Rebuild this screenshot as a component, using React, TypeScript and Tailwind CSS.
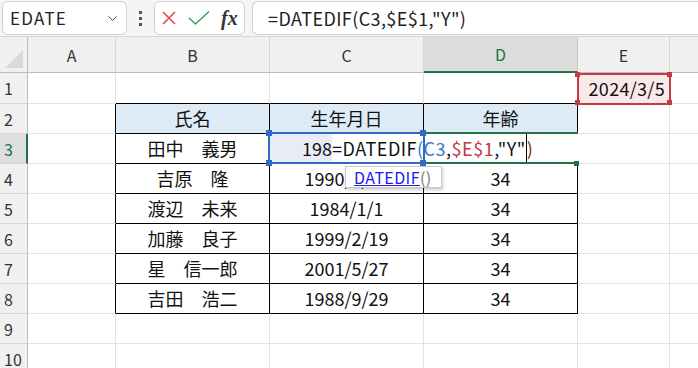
import { ChevronDown } from 'lucide-react'

const cellFont = "font-['Noto_Sans_CJK_JP','Noto_Sans',sans-serif]"

const people = [
  { name: '吉原　隆', born: '1990/1/23', age: '34' },
  { name: '渡辺　未来', born: '1984/1/1', age: '34' },
  { name: '加藤　良子', born: '1999/2/19', age: '34' },
  { name: '星　信一郎', born: '2001/5/27', age: '34' },
  { name: '吉田　浩二', born: '1988/9/29', age: '34' }
]

const grid = 'border-r border-b border-[#e1e1e1]'
const ruled = 'border-r border-b border-black'

function RowHead({ n, active = false }: { n: number; active?: boolean }) {
  return (
    <div
      className={
        active
          ? 'flex items-center pl-1 bg-[#dedede] border-r-2 border-r-[#217346] border-b border-b-[#d4d4d4] text-[#217346] text-[16px]'
          : 'flex items-center pl-1 bg-[#f0f0f0] border-r border-r-[#bdbdbd] border-b border-b-[#d8d8d8] text-[#333] text-[16px]'
      }
    >
      {n}
    </div>
  )
}

function FormulaBar() {
  return (
    <div className="h-[37px] flex items-center gap-0 bg-[#f5f5f5] border-b border-[#d6d6d6] pl-[2px]">
      <div className="w-[125px] h-[34px] flex items-center justify-between pl-[7px] pr-[6px] bg-white border border-[#d2d2d2] rounded-md text-[17px] tracking-[1.2px] text-[#222]">
        <span>EDATE</span>
        <ChevronDown size={15} strokeWidth={1.5} className="text-[#333]" />
      </div>
      <div className="w-[27px] flex flex-col items-center gap-[3px]">
        <span className="w-[3px] h-[3px] bg-[#555]" />
        <span className="w-[3px] h-[3px] bg-[#555]" />
        <span className="w-[3px] h-[3px] bg-[#555]" />
      </div>
      <div className="w-[91px] h-[34px] flex items-center gap-[11px] pl-[6px] bg-white border border-[#d2d2d2] rounded-md">
        <svg width="16" height="16" viewBox="0 0 16 16">
          <path d="M2 2 L14 14 M14 2 L2 14" stroke="#e5484d" strokeWidth="1.6" fill="none" />
        </svg>
        <svg width="22" height="16" viewBox="0 0 22 16">
          <path d="M1 8 L7.5 14 L21 1.5" stroke="#3aa35a" strokeWidth="1.6" fill="none" />
        </svg>
        <span className="font-['Liberation_Serif',serif] italic font-bold text-[20px] text-[#333] leading-none">
          fx
        </span>
      </div>
      <div className="flex-1 ml-[7px] h-[34px] flex items-center pl-[15px] bg-white border border-r-0 border-[#d2d2d2] rounded-l-md text-[18px] tracking-[0.4px] text-[#222]">
        =DATEDIF(C3,$E$1,"Y")
      </div>
    </div>
  )
}

function EditCell() {
  return (
    <div className="col-span-2 relative flex items-stretch border-b border-black bg-white tracking-[0.5px]">
      <div className="w-[62px] flex items-center justify-end bg-[#e8ecf6] tracking-normal">198</div>
      <span className="flex items-center whitespace-nowrap">
        =DATEDIF<span className="text-[#3a78cf]">(C3</span>,<span className="text-[#c0393f]">$E$1</span>,"Y"
      </span>
      <span className="w-px bg-black" />
      <span className="flex items-center text-[#5a3a1a]">)</span>
      <div className="absolute left-[-2px] top-[-2px] w-[157px] h-[32px] border-2 border-[#2f6bc4] pointer-events-none" />
      <div className="absolute left-[155px] top-[-2px] w-[153px] h-[2px] bg-[#217346]" />
      <div className="absolute left-[155px] top-[28px] w-[153px] h-[2px] bg-[#217346]" />
      <span className="absolute left-[-4px] top-[-4px] w-[6px] h-[6px] bg-[#2f6bc4]" />
      <span className="absolute left-[150px] top-[-4px] w-[6px] h-[6px] bg-[#2f6bc4]" />
      <span className="absolute left-[-4px] top-[26px] w-[6px] h-[6px] bg-[#2f6bc4]" />
      <span className="absolute left-[150px] top-[26px] w-[6px] h-[6px] bg-[#2f6bc4]" />
      <span className="absolute left-[304px] top-[27px] w-[5px] h-[5px] bg-[#217346]" />
      <div className="absolute left-[75px] top-[32px] w-[97px] h-[22px] z-10 flex items-center pl-[8px] bg-white border border-[#c8c8c8] shadow-[1px_2px_3px_rgba(0,0,0,0.2)] text-[16px] tracking-[0.4px] leading-none">
        <span className="text-[#1a1aee] underline">DATEDIF</span>
        <span className="text-[#777]">()</span>
      </div>
    </div>
  )
}

export default function App() {
  return (
    <div className={`w-[698px] h-[368px] overflow-hidden bg-white ${cellFont}`}>
      <FormulaBar />
      <div className="grid grid-cols-[28px_88px_154px_154px_154px_92px_1fr] grid-rows-[36px_31px_repeat(9,30px)] text-[18px] text-[#111]">
        {/* column headers */}
        <div className="relative bg-[#f0f0f0] border-r border-b border-[#bdbdbd]">
          <svg className="absolute right-[4px] bottom-[4px]" width="18" height="18" viewBox="0 0 18 18">
            <polygon points="18,0 18,18 0,18" fill="#d9d9d9" />
          </svg>
        </div>
        {['A', 'B', 'C'].map((c) => (
          <div key={c} className="flex items-center justify-center bg-[#f0f0f0] border-r border-r-[#d8d8d8] border-b border-b-[#bdbdbd] text-[16px] text-[#333]">
            {c}
          </div>
        ))}
        <div className="flex items-center justify-center bg-[#dcdcdc] border-r border-r-[#c8c8c8] border-b-2 border-b-[#217346] text-[16px] text-[#217346]">
          D
        </div>
        <div className="flex items-center justify-center bg-[#f0f0f0] border-r border-r-[#d8d8d8] border-b border-b-[#bdbdbd] text-[16px] text-[#333]">
          E
        </div>
        <div className="bg-[#f0f0f0] border-b border-b-[#bdbdbd]" />

        {/* row 1 */}
        <RowHead n={1} />
        <div className={grid} />
        <div className="border-r border-r-[#e1e1e1] border-b border-b-black" />
        <div className="border-r border-r-[#e1e1e1] border-b border-b-black" />
        <div className="border-r border-r-[#e1e1e1] border-b border-b-black" />
        <div className="relative flex items-center justify-end pr-[4px] bg-[#fbe9ea] border-r border-b border-[#e1e1e1] tracking-[0.3px]">
          2024/3/5
          <div className="absolute left-[-1px] top-0 w-[94px] h-[32px] border-2 border-[#c23a42]" />
          <span className="absolute left-[-3px] top-[-1px] w-[5px] h-[5px] bg-[#c23a42]" />
          <span className="absolute left-[89px] top-[-1px] w-[5px] h-[5px] bg-[#c23a42]" />
          <span className="absolute left-[-3px] top-[27px] w-[5px] h-[5px] bg-[#c23a42]" />
          <span className="absolute left-[89px] top-[27px] w-[5px] h-[5px] bg-[#c23a42]" />
        </div>
        <div className="border-b border-[#e1e1e1]" />

        {/* row 2 */}
        <RowHead n={2} />
        <div className="border-r border-r-black border-b border-b-[#e1e1e1]" />
        <div className={`${ruled} bg-[#ddebf7] flex items-center justify-center`}>氏名</div>
        <div className={`${ruled} bg-[#ddebf7] flex items-center justify-center`}>生年月日</div>
        <div className={`${ruled} bg-[#ddebf7] flex items-center justify-center`}>年齢</div>
        <div className={grid} />
        <div className="border-b border-[#e1e1e1]" />

        {/* row 3 */}
        <RowHead n={3} active />
        <div className="border-r border-r-black border-b border-b-[#e1e1e1]" />
        <div className={`${ruled} flex items-center justify-center`}>田中　義男</div>
        <EditCell />
        <div className={grid} />
        <div className="border-b border-[#e1e1e1]" />

        {/* rows 4-8 */}
        {people.map((p, i) => (
          <div key={p.name} className="contents">
            <RowHead n={i + 4} />
            <div className="border-r border-r-black border-b border-b-[#e1e1e1]" />
            <div className={`${ruled} flex items-center justify-center`}>{p.name}</div>
            <div className={`${ruled} flex items-center justify-center`}>{p.born}</div>
            <div className={`${ruled} flex items-center justify-center`}>{p.age}</div>
            <div className={grid} />
            <div className="border-b border-[#e1e1e1]" />
          </div>
        ))}

        {/* rows 9-10 */}
        {[9, 10].map((n) => (
          <div key={n} className="contents">
            <RowHead n={n} />
            <div className={grid} />
            <div className={grid} />
            <div className={grid} />
            <div className={grid} />
            <div className={grid} />
            <div className="border-b border-[#e1e1e1]" />
          </div>
        ))}
      </div>
    </div>
  )
}
